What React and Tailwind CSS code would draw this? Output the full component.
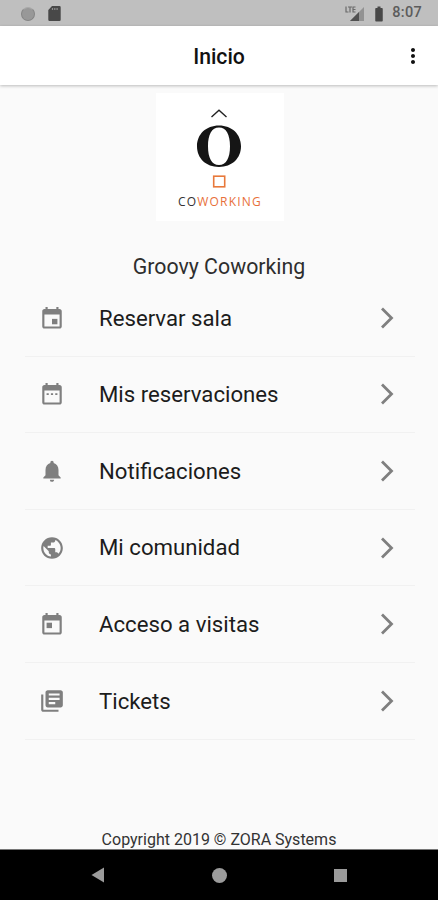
import React from 'react';
import {
    MdBatteryFull,
    MdLibraryBooks,
    MdMoreVert,
    MdNotifications,
    MdPublic,
} from 'react-icons/md';

const calendarBody = 'M19 3h-1V1h-2v2H8V1H6v2H5c-1.11 0-1.99.9-1.99 2L3 19c0 1.1.89 2 2 2h14c1.1 0 2-.9 2-2V5c0-1.1-.9-2-2-2zm0 16H5V8h14v11z';

const CalendarIcon = ({ mark, size, className }) => (
    <svg viewBox="0 -0.8 24 24" width={size} height={size} fill="currentColor" className={className}>
        <path d={calendarBody} />
        <path d={mark} />
    </svg>
);

const EventIcon = (props) => <CalendarIcon mark="M12 12h5v5h-5z" {...props} />;
const DateRangeIcon = (props) => <CalendarIcon mark="M7 10.5h2v1.6H7zM11 10.5h2v1.6h-2zM15 10.5h2v1.6h-2z" {...props} />;
const TodayIcon = (props) => <CalendarIcon mark="M7 10h5v5H7z" {...props} />;

const menu = [
    { label: 'Reservar sala', icon: EventIcon },
    { label: 'Mis reservaciones', icon: DateRangeIcon },
    { label: 'Notificaciones', icon: MdNotifications },
    { label: 'Mi comunidad', icon: MdPublic },
    { label: 'Acceso a visitas', icon: TodayIcon },
    { label: 'Tickets', icon: MdLibraryBooks },
];

const StatusBar = () => (
    <div className="flex h-[26px] shrink-0 items-center bg-[#bfbfbf] pt-px pr-[16px] pl-[21px] text-[#505050]">
        <div className="h-3.5 w-3.5 rounded-full border border-[#858585] border-t-[#aaa] bg-[#989898]" />
        <svg viewBox="0 0 13 15" className="ml-[13px] h-[15px] w-[13px]">
            <path d="M4 0h7.500a1.200 1.200 0 011.200 1.200v12.600a1.200 1.200 0 01-1.200 1.200h-10A1.200 1.200 0 01.3 13.800V4z" fill="#484848" />
            <path d="M4.500 2v2M6.800 2v2M9.100 2v2" stroke="#8f8f8f" strokeWidth="1.200" />
        </svg>
        <svg viewBox="0 0 20 16" className="ml-auto h-4 w-5">
            <path d="M19 1v14H5z" fill="#929292" />
            <path d="M14 6v9H5z" fill="#505050" />
            <path d="M1 .5v5.500h2.500M3 1h4M5 1v5.500M10.500 1H8v5h2.500M8 3.500h2.500" stroke="#6a6a6a" strokeWidth="1.200" fill="none" />
        </svg>
        <MdBatteryFull size={18} className="ml-[5px] text-[#484848]" />
        <span className="ml-1 text-[14.5px] leading-none font-medium tracking-[0.3px] text-[#5c5c5c]">8:07</span>
    </div>
);

const Logo = () => (
    <div className="flex h-32 w-32 flex-col items-center bg-white">
        <svg viewBox="0 0 128 97" className="h-[97px] w-32 shrink-0">
            <path d="M55.500 24l7.500-6.700L70.500 24" fill="none" stroke="#222" strokeWidth="1.400" />
            <path fillRule="evenodd" fill="#151515" d="M63 32.500c13 0 22 8.700 22 20.800S76 74 63 74s-22-8.600-22-20.700S50 32.500 63 32.500zM63 34.500c-7.300 0-11 7-11 18.800S55.700 72 63 72s11-6.900 11-18.700-3.700-18.800-11-18.800z" />
            <rect x="57.700" y="83.200" width="11" height="10.600" fill="none" stroke="#e8793b" strokeWidth="1.600" />
        </svg>
        <span className="mt-[5px] font-['Open_Sans'] text-[12px] leading-[14px] tracking-[1.2px] whitespace-nowrap text-[#333]">
            CO<span className="text-[#e8703a]">WORKING</span>
        </span>
    </div>
);

const MenuItem = ({ label, icon: Icon }) => (
    <li className="flex h-[76.6px] items-center border-b border-[#f1f1f1] pr-[21px] pl-[14px]">
        <Icon size={26} className="shrink-0 text-[#7f7f7f]" />
        <span className="ml-[34px] text-[22.2px] leading-none text-[#1c1c1c]">{label}</span>
        <svg viewBox="0 0 14 22" className="ml-auto h-[22px] w-3.5">
            <path d="M2 1.500l9.500 9.500L2 20.500" fill="none" stroke="#7f7f7f" strokeWidth="2.800" />
        </svg>
    </li>
);

export default function App() {
    return (
        <div className="flex h-[900px] w-[438px] flex-col overflow-hidden bg-[#fafafa] font-[Roboto,sans-serif]">
            <StatusBar />
            <header className="z-10 grid h-[59px] shrink-0 grid-cols-[1fr_auto_1fr] items-center bg-white shadow-[0_1px_3px_rgba(0,0,0,0.25)]">
                <h1 className="col-start-2 pt-0.5 text-[21.2px] font-medium text-[#111]">Inicio</h1>
                <MdMoreVert size={24} className="mr-[13px] justify-self-end text-[#111]" />
            </header>
            <main className="flex grow flex-col items-center pt-2 pl-0.5">
                <Logo />
                <h2 className="mt-[33px] mr-0.5 text-[21.3px] leading-[26px] text-[#2e2e2e]">Groovy Coworking</h2>
                <ul className="w-[390px]">
                    {menu.map((item) => (
                        <MenuItem key={item.label} {...item} />
                    ))}
                </ul>
                <footer className="mt-auto mr-0.5 text-[16px] leading-[19px] text-[#333]">Copyright 2019 © ZORA Systems</footer>
            </main>
            <nav className="flex h-[51px] shrink-0 items-center justify-center gap-[107px] border-t border-[#777] bg-black">
                <svg viewBox="0 0 14 16" className="h-4 w-3.5 fill-[#9b9b9b]">
                    <path d="M13 .5v15L.5 8z" />
                </svg>
                <div className="h-[15px] w-[15px] rounded-full bg-[#9b9b9b]" />
                <div className="h-[13px] w-[13px] bg-[#9b9b9b]" />
            </nav>
        </div>
    );
}
